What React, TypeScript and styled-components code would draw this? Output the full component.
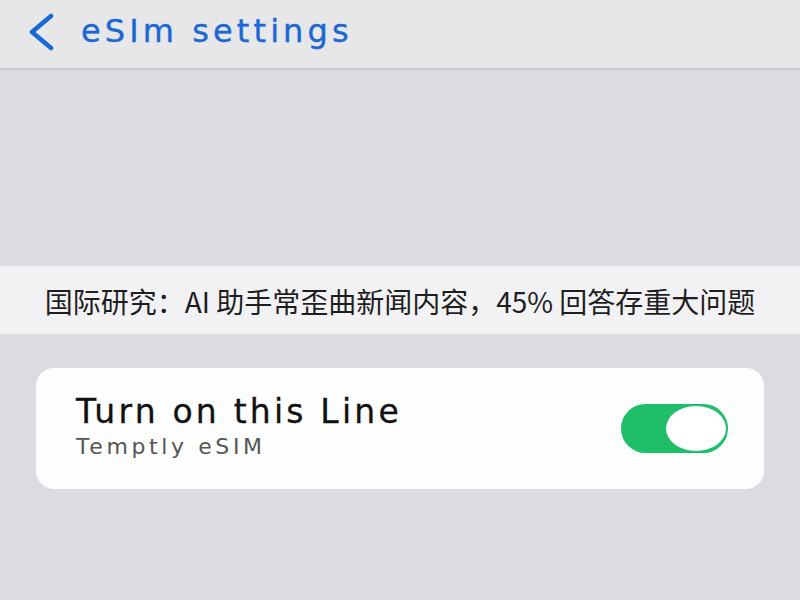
import React, { useState } from 'react';
import { styled, createGlobalStyle } from 'styled-components';

const GlobalStyle = createGlobalStyle`
  html, body {
    margin: 0;
    padding: 0;
    background: #dcdce0;
  }
  body {
    font-family: 'DejaVu Sans', 'Liberation Sans', sans-serif;
  }
`;

const App = () => {
  const [lineOn, setLineOn] = useState(true);

  return (
    <Page>
      <GlobalStyle />
      <NavBar>
        <BackButton aria-label="Back">
          <svg width="28" height="38" viewBox="0 0 28 38" fill="none">
            <path
              d="M24 3 L5 19 L24 35"
              stroke="#1a68d4"
              strokeWidth="4.5"
              strokeLinecap="round"
              strokeLinejoin="round"
            />
          </svg>
        </BackButton>
        <NavTitle>eSIm settings</NavTitle>
      </NavBar>

      <Spacer />

      <Caption>国际研究：AI 助手常歪曲新闻内容，45% 回答存重大问题</Caption>

      <Content>
        <Card>
          <LineText>
            <LineTitle>Turn on this Line</LineTitle>
            <LineSub>Temptly eSIM</LineSub>
          </LineText>
          <Toggle $on={lineOn} onClick={() => setLineOn((v) => !v)}>
            <Knob $on={lineOn} />
          </Toggle>
        </Card>
      </Content>
    </Page>
  );
};

const Page = styled.main`
  width: 800px;
  height: 600px;
  overflow: hidden;
  display: flex;
  flex-direction: column;
  background: #dcdce0;
`;

const NavBar = styled.header`
  height: 70px;
  box-sizing: border-box;
  display: flex;
  align-items: center;
  padding-left: 27px;
  background: #e7e7e9;
  border-bottom: 2px solid #cbcbcf;
`;

const BackButton = styled.button`
  border: 0;
  padding: 0;
  background: none;
  display: flex;
  align-items: center;
  margin-right: 26px;
  margin-top: -4px;
  cursor: pointer;
`;

const NavTitle = styled.h1`
  margin: 0 0 6px;
  font-size: 32px;
  font-weight: 400;
  letter-spacing: 4.1px;
  color: #1a68d4;
  -webkit-text-stroke: 0.4px #1a68d4;
`;

const Spacer = styled.div`
  height: 196px;
`;

const Caption = styled.div`
  height: 68px;
  display: flex;
  align-items: center;
  justify-content: center;
  background: #f2f2f4;
  color: #1e1e1e;
  font-family: 'Noto Sans CJK SC', 'Noto Sans', sans-serif;
  font-size: 28px;
  padding-top: 2px;
  box-sizing: border-box;
`;

const Content = styled.div`
  padding: 34px 36px 0;
`;

const Card = styled.section`
  height: 121px;
  box-sizing: border-box;
  background: #fdfdfd;
  border-radius: 18px;
  display: flex;
  align-items: center;
  justify-content: space-between;
  padding: 0 36px 0 40px;
`;

const LineText = styled.div`
  display: flex;
  flex-direction: column;
  margin-top: -1px;
`;

const LineTitle = styled.div`
  font-size: 33px;
  line-height: 38px;
  color: #111;
  letter-spacing: 3.2px;
  -webkit-text-stroke: 0.3px #111;
`;

const LineSub = styled.div`
  font-size: 22px;
  line-height: 32px;
  color: #555;
  letter-spacing: 3.6px;
`;

const Toggle = styled.button<{ $on: boolean }>`
  width: 107px;
  height: 49px;
  border: 0;
  padding: 2px;
  border-radius: 25px;
  background: ${(p) => (p.$on ? '#1fbf6a' : '#e3e3e6')};
  display: flex;
  justify-content: ${(p) => (p.$on ? 'flex-end' : 'flex-start')};
  align-items: center;
  box-sizing: border-box;
  cursor: pointer;
`;

const Knob = styled.span<{ $on: boolean }>`
  width: 60px;
  height: 45px;
  border-radius: 50%;
  background: #fff;
`;

export default App;
